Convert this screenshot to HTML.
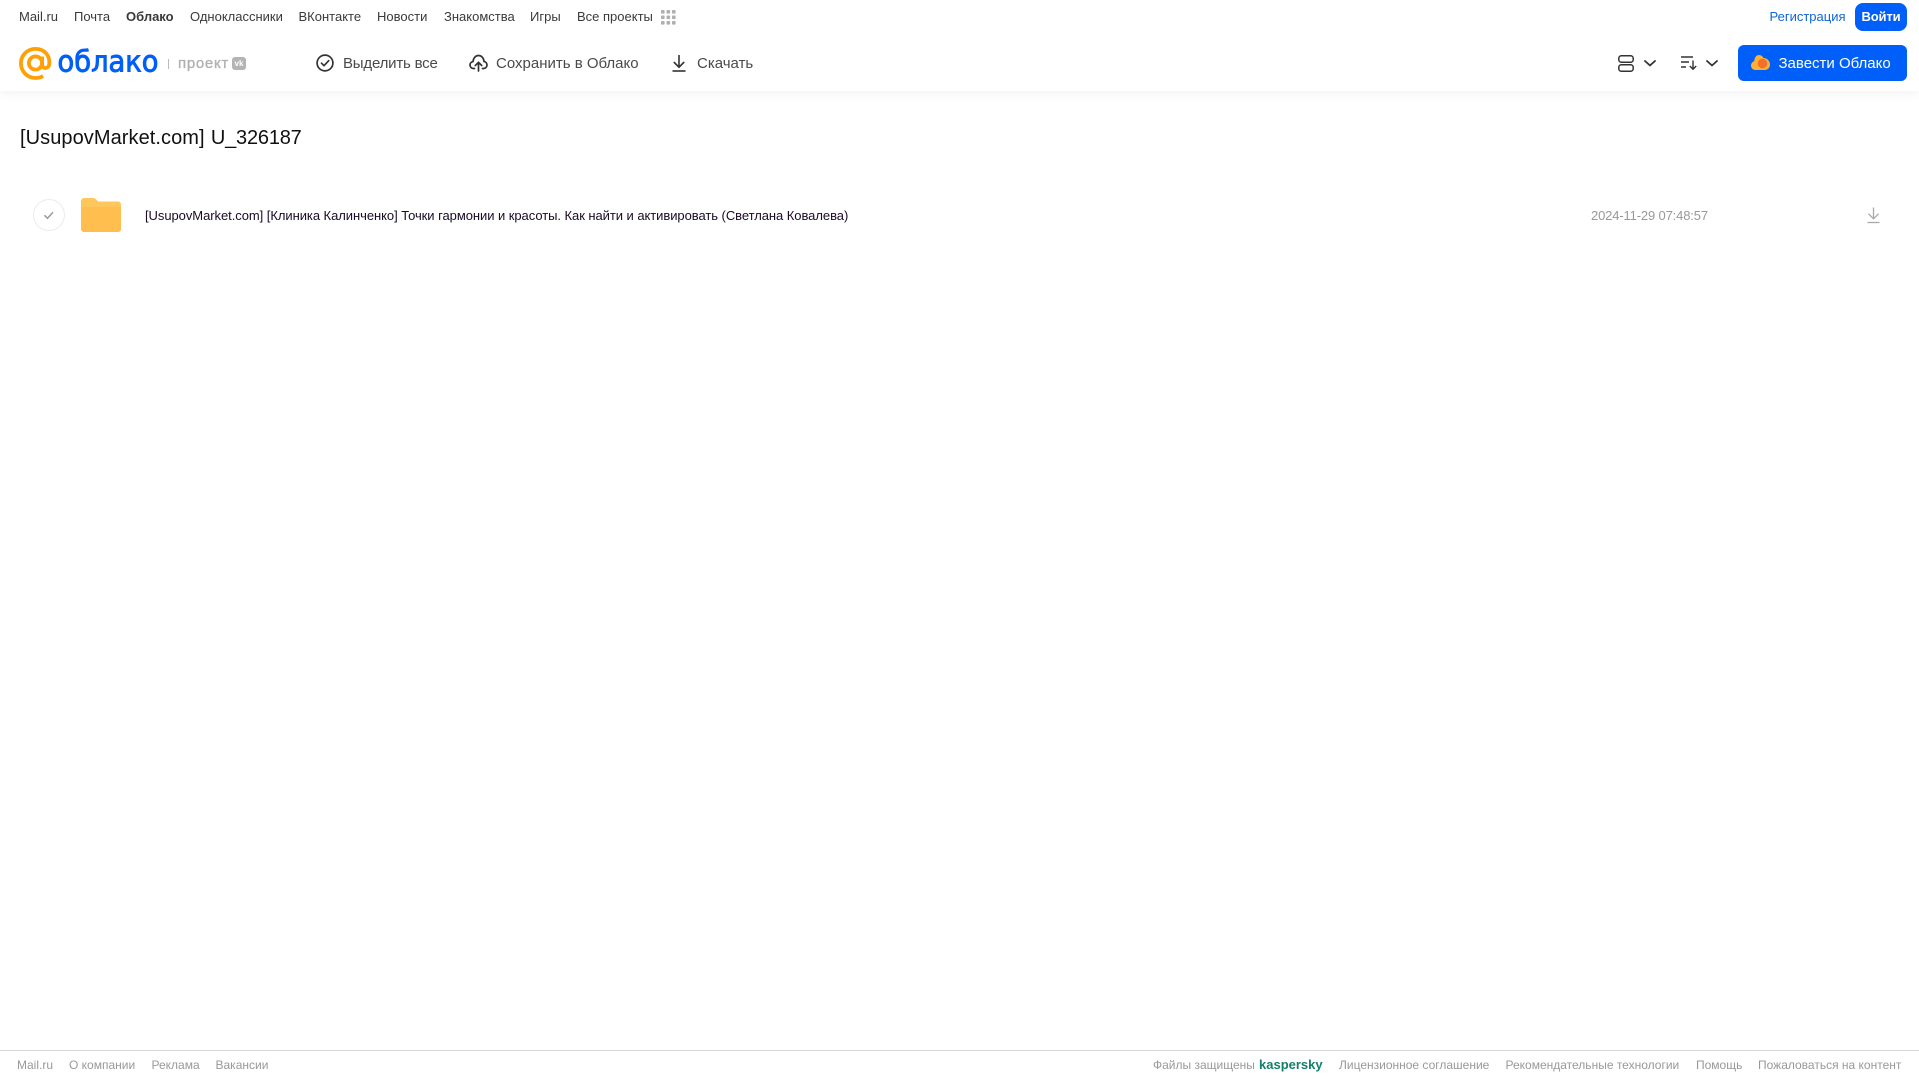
<!DOCTYPE html>
<html lang="ru"><head><meta charset="utf-8"><title>Облако</title>
<style>
html,body{margin:0;padding:0;background:#fff;width:1919px;height:1079px;overflow:hidden}
body{position:relative;font-family:"Liberation Sans",Arial,sans-serif}
.t{position:absolute;white-space:nowrap;line-height:1}
.n{top:10px;font-size:13px;color:#3a3a3a}
.h{top:56px;font-size:15px;color:#4a4a4a}
.f{top:1059px;font-size:12px;color:#999}
svg{position:absolute;display:block;overflow:visible}
</style></head><body>
<div style="position:absolute;left:0;top:0;width:1919px;height:91px;background:#fff;box-shadow:0 2px 10px rgba(0,0,0,.06)"></div>

<span class="t n" style="left:19px">Mail.ru</span>
<span class="t n" style="left:74px">Почта</span>
<span class="t n" style="left:126px;font-weight:bold">Облако</span>
<span class="t n" style="left:190px">Одноклассники</span>
<span class="t n" style="left:298.500px">ВКонтакте</span>
<span class="t n" style="left:377px">Новости</span>
<span class="t n" style="left:444px">Знакомства</span>
<span class="t n" style="left:530px">Игры</span>
<span class="t n" style="left:577px">Все проекты</span>
<svg style="left:661px;top:10px" width="15" height="15" fill="#b0b0b0"><rect x="0" y="0" width="3.600" height="3.600" rx=".8"/><rect x="5.500" y="0" width="3.600" height="3.600" rx=".8"/><rect x="11" y="0" width="3.600" height="3.600" rx=".8"/><rect x="0" y="5.500" width="3.600" height="3.600" rx=".8"/><rect x="5.500" y="5.500" width="3.600" height="3.600" rx=".8"/><rect x="11" y="5.500" width="3.600" height="3.600" rx=".8"/><rect x="0" y="11" width="3.600" height="3.600" rx=".8"/><rect x="5.500" y="11" width="3.600" height="3.600" rx=".8"/><rect x="11" y="11" width="3.600" height="3.600" rx=".8"/></svg>

<span class="t n" style="left:1769.500px;color:#0e66d8">Регистрация</span>
<div style="position:absolute;left:1855px;top:3px;width:52px;height:28px;border-radius:8px;background:#005ff9;color:#fff;font-size:13px;font-weight:bold;letter-spacing:-.15px;line-height:28px;text-align:center">Войти</div>

<svg style="left:19px;top:47px" width="33" height="33" viewBox="0 0 33 33" fill="none" stroke="#ffa008" stroke-width="3.800"><circle cx="16.500" cy="16" r="6.600"/><path d="M23.100 9.500v8.200c0 4.600 6.800 4.600 7.200-1 .7-9-5.500-14.800-13.800-14.800C8.300 1.900 1.900 8.300 1.900 16.300c0 8.200 6.500 14.700 14.700 14.700 2.900 0 5.300-.7 7.500-2"/></svg>
<svg style="left:56px;top:42px" width="106" height="40"><text x="1.500" y="29.500" font-family="DejaVu Sans,Liberation Sans,sans-serif" font-size="29" fill="#005ff9" stroke="#005ff9" stroke-width=".9" textLength="101" lengthAdjust="spacingAndGlyphs">облако</text></svg>
<div style="position:absolute;left:168px;top:59px;width:1px;height:10px;background:#bbb"></div>
<span class="t" style="left:178px;top:56px;font-size:15px;color:#b0b0b0;letter-spacing:.7px;-webkit-text-stroke:.35px #b0b0b0">проект</span>
<div style="position:absolute;left:232px;top:57px;width:14px;height:13px;border-radius:3px;background:#b4b4b4;color:#fff;font-size:8px;font-weight:bold;line-height:13px;text-align:center">vk</div>

<svg style="left:316px;top:54px" width="18" height="18" fill="none" stroke="#333" stroke-width="1.700"><circle cx="9" cy="9" r="7.900"/><path d="M5.500 9.200l2.500 2.500 4.700-5" stroke-linecap="round" stroke-linejoin="round"/></svg>
<span class="t h" style="left:343px;letter-spacing:-.2px">Выделить все</span>
<svg style="left:469px;top:54px" width="19" height="18" fill="none" stroke="#333" stroke-width="1.700" stroke-linecap="round" stroke-linejoin="round"><path d="M5.500 14.500H4.500C2.300 14.500 1 12.800 1 11c0-1.800 1.300-3.200 3-3.400C4.400 4 6.600 1.500 9.500 1.500c3 0 5.200 2.400 5.500 6 1.700.2 3 1.700 3 3.500 0 1.900-1.400 3.500-3.500 3.500h-1"/><path d="M9.500 17V8.500M6.300 11.500l3.200-3.200 3.200 3.200"/></svg>
<span class="t h" style="left:496px">Сохранить в Облако</span>
<svg style="left:672px;top:54px" width="14" height="18" fill="none" stroke="#333" stroke-width="1.600"><path d="M7 1v12M1.800 8l5.200 5.200L12.200 8"/><path d="M.5 17h13"/></svg>
<span class="t h" style="left:697px">Скачать</span>

<svg style="left:1618px;top:55px" width="16" height="17" fill="none" stroke="#333" stroke-width="1.500"><rect x=".8" y=".8" width="14.400" height="6.400" rx="2.500"/><rect x=".8" y="9.800" width="14.400" height="6.400" rx="2.500"/></svg>
<svg style="left:1644px;top:60px" width="12" height="7" fill="none" stroke="#333" stroke-width="1.800" stroke-linecap="round" stroke-linejoin="round"><path d="M1 1l5 4.500L11 1"/></svg>
<svg style="left:1681px;top:56px" width="17" height="15" fill="none" stroke="#333" stroke-width="1.400"><path d="M0 1h12M0 6h8M0 11h5"/><path d="M12 4.500V13M8.800 10l3.200 3.200 3.200-3.200"/></svg>
<svg style="left:1706px;top:60px" width="12" height="7" fill="none" stroke="#333" stroke-width="1.800" stroke-linecap="round" stroke-linejoin="round"><path d="M1 1l5 4.500L11 1"/></svg>

<div style="position:absolute;left:1738px;top:45px;width:169px;height:36px;border-radius:6px;background:#005ff9"></div>
<svg style="left:1750.500px;top:54px" width="19" height="17"><path d="M4.500 16C2 16 0 14 0 11.500 0 9.500 1.300 7.800 3.200 7.200 3.500 3.300 5.500 1 8 1c2 0 3.500 1 4.500 3 3.500 0 6.500 3 6.500 6.500S16.500 16 13.500 16z" fill="#ffb030"/><circle cx="11.500" cy="9.500" r="4.800" fill="#f4702a"/></svg>
<span class="t" style="left:1778.500px;top:56px;font-size:15px;color:#fff">Завести Облако</span>

<span class="t" style="left:20px;top:128px;font-size:20px;color:#111"><span style="letter-spacing:.07px;word-spacing:.6px">[UsupovMarket.com] </span><span style="letter-spacing:-.2px">U_326187</span></span>

<svg style="left:33px;top:199px" width="32" height="32" fill="none"><circle cx="16" cy="16" r="15.500" stroke="#ececec"/><path d="M11.500 16.300l3 3 5.500-6" stroke="#999" stroke-width="1.500"/></svg>
<svg style="left:81px;top:198px" width="40" height="34"><path d="M0 3a3 3 0 0 1 3-3h9c2 0 3 1 4 2.500.6.800 1.200 1 2.500 1H37a3 3 0 0 1 3 3V31a3 3 0 0 1-3 3H3a3 3 0 0 1-3-3z" fill="#ffc65c"/><path d="M0 9h40v22a3 3 0 0 1-3 3H3a3 3 0 0 1-3-3z" fill="#ffbe4d"/></svg>
<span class="t" style="left:145px;top:209px;font-size:13px;letter-spacing:-.055px;color:#1a0a26">[UsupovMarket.com] [Клиника Калинченко] Точки гармонии и красоты. Как найти и активировать (Светлана Ковалева)</span>
<span class="t" style="left:1591px;top:209px;font-size:13px;letter-spacing:-.15px;color:#999">2024-11-29 07:48:57</span>
<svg style="left:1866.500px;top:207px" width="13" height="17" fill="none" stroke="#aaa" stroke-width="1.300"><path d="M6.500 .5v11M1.500 6.800l5 5 5-5"/><path d="M.5 15.500h12"/></svg>

<div style="position:absolute;left:0;top:1050px;width:1919px;height:1px;background:#d6d6d6"></div>
<span class="t f" style="left:17px">Mail.ru</span>
<span class="t f" style="left:69px">О компании</span>
<span class="t f" style="left:151.500px">Реклама</span>
<span class="t f" style="left:215.500px">Вакансии</span>
<span class="t f" style="left:1153px">Файлы защищены</span>
<span class="t f" style="left:1259px;top:1058px;font-size:13px;font-weight:bold;color:#137f6c">kaspersky</span>
<span class="t f" style="left:1339px">Лицензионное соглашение</span>
<span class="t f" style="left:1505.500px">Рекомендательные технологии</span>
<span class="t f" style="left:1696px">Помощь</span>
<span class="t f" style="left:1758px">Пожаловаться на контент</span>
</body></html>
